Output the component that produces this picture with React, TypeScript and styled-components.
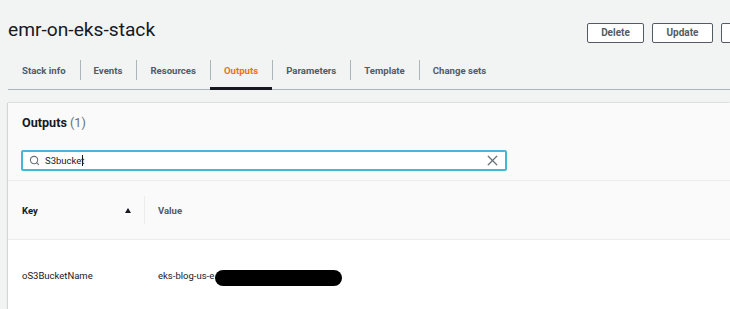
import React from "react";
import styled, { createGlobalStyle } from "styled-components";
import { Search, X } from "lucide-react";

const GlobalStyle = createGlobalStyle`
  html, body {
    margin: 0;
    padding: 0;
    background: #f2f3f3;
    overflow: hidden;
    font-family: Roboto, "Open Sans", Arial, sans-serif;
    color: #16191f;
  }
  * { box-sizing: border-box; }
`;

const Page = styled.div`
  width: 730px;
  padding-left: 8px;
`;

const Header = styled.header`
  display: grid;
  grid-template-columns: 579px 1fr;
  height: 58px;
  align-items: start;
`;

const Title = styled.h1`
  margin: 18px 0 0;
  font-size: 19.2px;
  line-height: 24px;
  font-weight: 400;
  color: #16191f;
`;

const Actions = styled.div`
  display: flex;
  gap: 8px;
  margin-top: 23px;
  white-space: nowrap;
  overflow: hidden;
`;

const Button = styled.button<{ $w: number }>`
  flex: none;
  width: ${(p) => p.$w}px;
  height: 20px;
  padding: 0;
  border: 1px solid #545b64;
  border-radius: 2px;
  background: #fff;
  color: #545b64;
  font-family: inherit;
  font-size: 10px;
  font-weight: 700;
  line-height: 18px;
`;

const Tabs = styled.nav`
  display: flex;
  height: 32px;
  border-bottom: 1px solid #aab7b8;
`;

const Tab = styled.div<{ $active?: boolean; $first?: boolean }>`
  position: relative;
  height: 31px;
  padding: 6px 14px 0;
  font-size: 9.6px;
  line-height: 14px;
  font-weight: 700;
  color: ${(p) => (p.$active ? "#ec7211" : "#545b64")};
  white-space: nowrap;

  &::before {
    content: "";
    display: ${(p) => (p.$first ? "none" : "block")};
    position: absolute;
    left: 0;
    top: 2px;
    width: 1px;
    height: 20px;
    background: #aab7b8;
  }

  &::after {
    content: "";
    display: ${(p) => (p.$active ? "block" : "none")};
    position: absolute;
    left: 0;
    right: 0;
    bottom: -1px;
    height: 3px;
    background: #16191f;
  }
`;

const Panel = styled.section`
  margin-top: 13px;
  background: #fafafa;
  box-shadow: -1px 0 1px 0 rgba(0, 28, 36, 0.12), 0 -1px 1px 0 rgba(0, 28, 36, 0.06);
`;

const PanelHeader = styled.div`
  padding: 11px 14px 9px;
  border-bottom: 1px solid #eaeded;
`;

const PanelTitle = styled.h2`
  margin: 0;
  font-size: 12.6px;
  line-height: 18px;
  font-weight: 700;
  color: #16191f;
`;

const Count = styled.span`
  font-weight: 400;
  color: #687078;
`;

const SearchBox = styled.div`
  display: flex;
  align-items: center;
  margin: 18px 0 0 -1px;
  width: 486px;
  height: 21px;
  padding: 0 4px 0 6px;
  background: #fff;
  border: 2px solid #44b9d6;
  border-radius: 2px;
  color: #687078;
`;

const SearchText = styled.span`
  flex: 1;
  margin-left: 5px;
  font-size: 9.5px;
  color: #16191f;
  line-height: 14px;
`;

const Caret = styled.span`
  display: inline-block;
  width: 1px;
  height: 11px;
  margin-left: -2px;
  background: #16191f;
  vertical-align: -2px;
`;

const TableHead = styled.div`
  display: grid;
  grid-template-columns: 136px 1fr;
  height: 59px;
  align-items: center;
  border-bottom: 1px solid #eaeded;
`;

const HeadCell = styled.div<{ $sorted?: boolean; $pad?: number }>`
  display: flex;
  align-items: center;
  justify-content: space-between;
  padding: 0 13px 0 ${(p) => p.$pad ?? 14}px;
  font-size: 9.5px;
  font-weight: 700;
  color: ${(p) => (p.$sorted ? "#16191f" : "#545b64")};
`;

const ColDivider = styled.div`
  display: flex;
  align-items: center;
  height: 28px;
  border-left: 1px solid #eaeded;
  padding-left: 13px;
`;

const SortArrow = styled.span`
  width: 0;
  height: 0;
  border-left: 3.5px solid transparent;
  border-right: 3.5px solid transparent;
  border-bottom: 5px solid #16191f;
`;

const Row = styled.div`
  display: grid;
  grid-template-columns: 136px 1fr;
  height: 72px;
  align-items: center;
  background: #fff;
`;

const Cell = styled.div`
  display: flex;
  align-items: center;
  height: 20px;
  padding-left: 14px;
  font-size: 9.5px;
  line-height: 12px;
  color: #16191f;
`;

const Redacted = styled.span`
  display: inline-block;
  width: 127px;
  height: 16px;
  margin-left: 1px;
  margin-top: 4px;
  border-radius: 8px;
  background: #000;
`;

export default function App() {
  const tabs = ["Stack info", "Events", "Resources", "Outputs", "Parameters", "Template", "Change sets"];
  return (
    <>
      <GlobalStyle />
      <Page>
        <Header>
          <Title>emr-on-eks-stack</Title>
          <Actions>
            <Button $w={57}>Delete</Button>
            <Button $w={61}>Update</Button>
            <Button $w={90} aria-label="Stack actions" />
          </Actions>
        </Header>
        <Tabs>
          {tabs.map((t, i) => (
            <Tab key={t} $first={i === 0} $active={t === "Outputs"}>
              {t}
            </Tab>
          ))}
        </Tabs>
        <Panel>
          <PanelHeader>
            <PanelTitle>
              Outputs <Count>(1)</Count>
            </PanelTitle>
            <SearchBox>
              <Search size={11} strokeWidth={2.4} />
              <SearchText>
                S3bucket<Caret />
              </SearchText>
              <X size={17} strokeWidth={1.8} />
            </SearchBox>
          </PanelHeader>
          <TableHead>
            <HeadCell $sorted>
              Key
              <SortArrow />
            </HeadCell>
            <HeadCell $pad={0}>
              <ColDivider>Value</ColDivider>
            </HeadCell>
          </TableHead>
          <Row>
            <Cell>oS3BucketName</Cell>
            <Cell>
              eks-blog-us-e
              <Redacted />
            </Cell>
          </Row>
        </Panel>
      </Page>
    </>
  );
}
